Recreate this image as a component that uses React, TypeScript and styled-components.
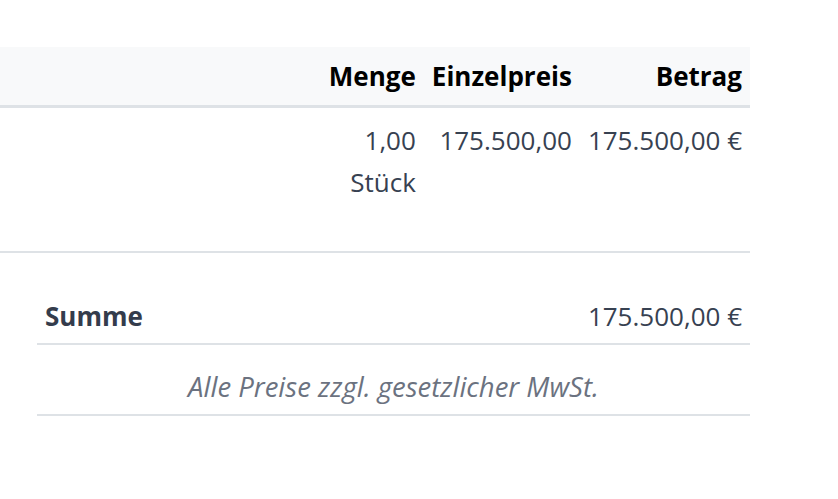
import React from 'react';
import styled, { createGlobalStyle } from 'styled-components';

const GlobalStyle = createGlobalStyle`
  body {
    margin: 0;
    background: #ffffff;
    font-family: 'Open Sans', 'Noto Sans', sans-serif;
    font-size: 26px;
    line-height: 42px;
    color: #374151;
  }
`;

type Position = {
  quantity: string;
  unit: string;
  unitPrice: string;
  amount: string;
};

const positions: Position[] = [
  { quantity: '1,00', unit: 'Stück', unitPrice: '175.500,00', amount: '175.500,00 €' },
];

const Page = styled.div`
  width: 750px;
  padding-top: 47px;
`;

const PositionGrid = styled.div`
  display: grid;
  grid-template-columns: 1fr auto auto auto;
`;

const HeadCell = styled.div<{ $first?: boolean }>`
  background: #f8f9fa;
  border-bottom: 3px solid #dee2e6;
  padding: 8px 8px 8px ${({ $first }) => ($first ? '0' : '8px')};
  font-weight: 700;
  color: #000000;
  text-align: right;
`;

const BodyCell = styled.div`
  padding: 11px 8px 48px 8px;
  border-bottom: 2px solid #dee2e6;
  text-align: right;
  white-space: nowrap;
`;

const StackedCell = styled(BodyCell)`
  display: flex;
  flex-direction: column;
  align-items: flex-end;
`;

const Summary = styled.div`
  margin: 36px 0 0 37px;
`;

const SumRow = styled.div`
  display: flex;
  justify-content: space-between;
  padding: 6px 8px;
  border-bottom: 2px solid #dee2e6;
`;

const SumLabel = styled.span`
  font-weight: 700;
  color: #343c4c;
`;

const Note = styled.div`
  padding: 21px 8px 6px;
  border-bottom: 2px solid #dee2e6;
  text-align: center;
  font-style: italic;
  font-size: 27.5px;
  color: #6b7280;
`;

export default function App() {
  return (
    <>
      <GlobalStyle />
      <Page>
        <PositionGrid>
          <HeadCell $first />
          <HeadCell>Menge</HeadCell>
          <HeadCell>Einzelpreis</HeadCell>
          <HeadCell>Betrag</HeadCell>
          {positions.map((p) => (
            <React.Fragment key={p.amount}>
              <BodyCell />
              <StackedCell>
                <span>{p.quantity}</span>
                <span>{p.unit}</span>
              </StackedCell>
              <BodyCell>{p.unitPrice}</BodyCell>
              <BodyCell>{p.amount}</BodyCell>
            </React.Fragment>
          ))}
        </PositionGrid>
        <Summary>
          <SumRow>
            <SumLabel>Summe</SumLabel>
            <span>175.500,00 €</span>
          </SumRow>
          <Note>Alle Preise zzgl. gesetzlicher MwSt.</Note>
        </Summary>
      </Page>
    </>
  );
}
